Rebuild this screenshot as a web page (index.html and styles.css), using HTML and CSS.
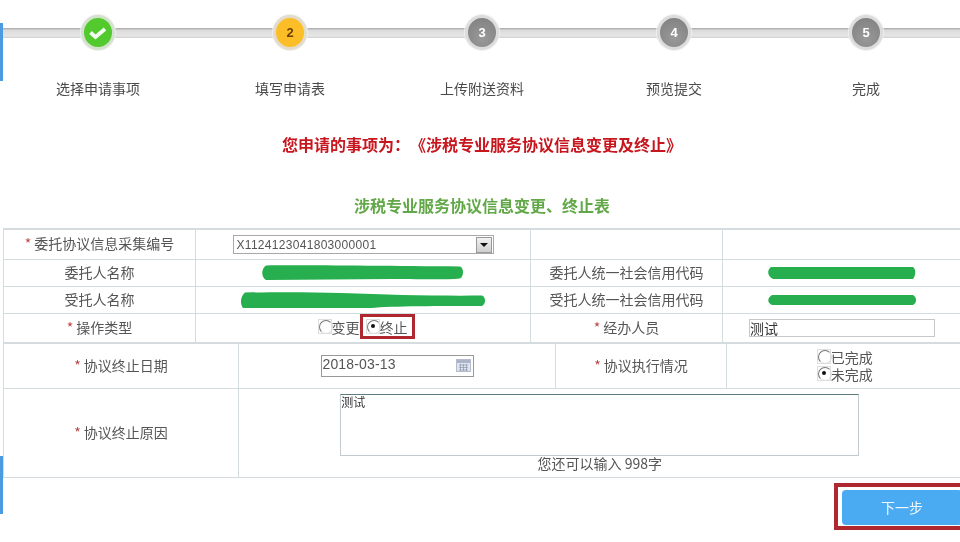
FILE: index.html
```
<!DOCTYPE html>
<html lang="zh-CN">
<head>
<meta charset="utf-8">
<title>涉税专业服务协议信息变更、终止表</title>
<link rel="stylesheet" href="styles.css">
</head>
<body>
<div class="page">
  <span class="edge edge-top"></span>
  <span class="edge edge-bottom"></span>
  <ol class="stepper">
    <li class="step done"><span class="dot"><svg width="20" height="20" viewBox="0 0 20 20"><path d="M2.500 9.500l5 4.500 9.500-8" fill="none" stroke="#f4fbef" stroke-width="3.800"/></svg></span><span class="step-label">选择申请事项</span></li>
    <li class="step current"><span class="dot">2</span><span class="step-label">填写申请表</span></li>
    <li class="step"><span class="dot">3</span><span class="step-label">上传附送资料</span></li>
    <li class="step"><span class="dot">4</span><span class="step-label">预览提交</span></li>
    <li class="step"><span class="dot">5</span><span class="step-label">完成</span></li>
  </ol>
  <h2 class="notice">您申请的事项为<span class="colon">：</span>《涉税专业服务协议信息变更及终止》</h2>
  <h1 class="form-title">涉税专业服务协议信息变更、终止表</h1>
  <table class="grid grid-a">
    <colgroup><col class="a1"><col class="a2"><col class="a3"><col class="a4"></colgroup>
    <tr class="r30">
      <td><i>*</i> 委托协议信息采集编号</td>
      <td><span class="select"><span>X1124123041803000001</span><b class="arrow"></b></span></td>
      <td></td><td></td>
    </tr>
    <tr class="r27">
      <td>委托人名称</td>
      <td><svg class="mask" width="202" height="15" viewBox="0 0 202 15"><path d="M4 0.500C40 0 120 1 198 1.500C202 3 202 11 198 13.500C180 15 160 14 130 14L4 15C-1 12 -1 4 4 0.500Z"/></svg></td>
      <td>委托人统一社会信用代码</td>
      <td><svg class="mask" width="149" height="14" viewBox="0 0 149 14"><path d="M4 1L146 1C149 3 149 9 146 13L6 13C0 10 0 4 4 1Z"/></svg></td>
    </tr>
    <tr class="r27">
      <td>受托人名称</td>
      <td><svg class="mask" width="245" height="16" viewBox="0 0 245 16"><path d="M4 0.500C40 0 70 0 100 1C150 3 200 4 241 3.500C245 5 245 12 241 14C200 14 150 14 130 16L2 16C-1 12 -1 5 4 0.500Z"/></svg></td>
      <td>受托人统一社会信用代码</td>
      <td><svg class="mask" width="150" height="12" viewBox="0 0 150 12"><path d="M5 1L146 1C150 3 150 9 146 11L5 11C0 9 0 4 5 1Z"/></svg></td>
    </tr>
    <tr class="r29">
      <td><i>*</i> 操作类型</td>
      <td><span class="op-row"><label class="choice"><input class="radio" type="radio" name="op">变更</label><label class="choice marked"><input class="radio" type="radio" name="op" checked>终止</label></span></td>
      <td><i>*</i> 经办人员</td>
      <td><input class="field staff" type="text" value="测试"></td>
    </tr>
  </table>
  <table class="grid grid-b">
    <colgroup><col class="b1"><col class="b2"><col class="b3"><col class="b4"></colgroup>
    <tr class="r45">
      <td><i>*</i> 协议终止日期</td>
      <td><span class="date"><span>2018-03-13</span><svg width="15" height="13" viewBox="0 0 15 13"><rect x="0.500" y="0.500" width="14" height="12" fill="#dfe4ee" stroke="#b5bccb"/><rect x="1" y="1" width="13" height="3" fill="#aab4c8"/><path d="M3 6h9M3 8.500h9M3 11h9M4.500 5v7M7.500 5v7M10.500 5v7" stroke="#8d97ac" stroke-width=".7"/></svg></span></td>
      <td><i>*</i> 协议执行情况</td>
      <td><div class="stack"><label class="choice"><input class="radio" type="radio" name="st">已完成</label><label class="choice"><input class="radio" type="radio" name="st" checked>未完成</label></div></td>
    </tr>
    <tr class="r89">
      <td><i>*</i> 协议终止原因</td>
      <td colspan="3" class="reason"><textarea class="memo">测试</textarea><p class="count">您还可以输入 998字</p></td>
    </tr>
  </table>
  <div class="actions"><div class="marked-btn"><button class="next" type="button">下一步</button></div></div>
</div>
</body>
</html>
```
FILE: styles.css
```
* { box-sizing: border-box; }
html, body { margin: 0; height: 100%; }
body { background: #fff; overflow: hidden; font-family: "Noto Sans CJK SC", sans-serif; font-size: 14px; color: #555; }
.page { position: relative; width: 960px; height: 542px; overflow: hidden; filter: blur(.35px); }
.edge { position: absolute; left: 0; width: 3px; background: #4a9be0; }
.edge-top { top: 23px; height: 58px; }
.edge-bottom { top: 456px; height: 58px; }

.stepper {
  list-style: none; margin: 0; padding: 15px 0 0 2px; width: 962px; height: 100px;
  display: grid; grid-template-columns: repeat(5, 192px);
  background: linear-gradient(#a9a9a9, #dcdcdc 25%, #e6e6e6 80%, #d0d0d0) 3px 28px / 957px 10px no-repeat;
}
.step { display: flex; flex-direction: column; align-items: center; }
.dot {
  width: 34px; height: 35px; border-radius: 50%; display: flex; align-items: center; justify-content: center;
  border: 3px solid #dcdcdc; font: bold 13px "Liberation Sans", sans-serif; color: #fff;
  background: radial-gradient(circle at 50% 70%, #999, #7e7e7e);
  box-shadow: 0 0 0 1px #efefef;
}
.done .dot { background: #52c92c; border-color: #d3e2cc; }
.current .dot { background: #fbbe27; border-color: #e3dccb; color: #6d3d00; }
.step-label { margin-top: 28px; line-height: 20px; color: #4a4a4a; }

.notice, .form-title { margin: 0; font-size: 16px; line-height: 24px; font-weight: 700; text-align: center; text-spacing-trim: space-all; }
.notice { color: #c8161e; margin-top: 32px; padding-left: 4px; }
.colon { font-family: "Noto Sans CJK TC", sans-serif; }
.form-title { color: #62a848; margin-top: 37px; padding-left: 4px; margin-bottom: 11px; }

.grid { border-collapse: collapse; table-layout: fixed; width: 957px; margin-left: 3px; }
.grid td { border: 1px solid #d5dcdf; padding: 0 0 2px; line-height: 20px; text-align: center; vertical-align: middle; }
.grid tr > td:last-child { border-right: 0; }
.grid-a { border-top: 2px solid #d5dcdf; }
.grid-b { border-top: 2px solid #d5dcdf; }
.grid-a tr:last-child td { border-bottom: 0; }
.grid-b tr:first-child td { border-top: 0; }
.a1 { width: 192px; } .a2 { width: 335px; } .a3 { width: 192px; } .a4 { width: 238px; }
.b1 { width: 235px; } .b2 { width: 317px; } .b3 { width: 171px; } .b4 { width: 234px; }
.r30 { height: 30px; } .r29 { height: 29px; } .r27 { height: 27px; } .r45 { height: 45px; } .r89 { height: 89px; }
i { font-style: normal; color: #b44; }

.select {
  display: inline-flex; align-items: center; justify-content: space-between; width: 261px; height: 19px;
  border: 1px solid #a9a9a9; padding: 0 1px 0 3px; font: 12px "Liberation Sans", sans-serif; letter-spacing: .3px; text-align: left; vertical-align: middle;
}
.arrow {
  width: 16px; height: 16px; border: 1px solid #999; background: linear-gradient(#f2f2f2, #cfcfcf);
  display: flex; align-items: center; justify-content: center;
}
.arrow::before { content: ""; border: 4px solid transparent; border-top: 4px solid #111; border-bottom: 0; }
.mask { display: block; margin: 2px auto 0; fill: #27ae4e; }

.op-row { display: inline-flex; align-items: center; margin-left: 6px; vertical-align: middle; }
.choice { display: inline-flex; align-items: center; line-height: 16px; }
.radio {
  appearance: none; flex: none; margin: -1px 0 0 0; width: 14px; height: 15px; border: 1px solid #dedede; border-radius: 0; background: #fff; position: relative;
}
.radio::before { content: ""; position: absolute; left: 0; top: 0; width: 12px; height: 12px; border-radius: 50%; border: 1px solid; border-color: #777 #ddd #ddd #777; }
.radio:checked::after { content: ""; position: absolute; left: 4px; top: 4px; width: 4px; height: 4px; border-radius: 50%; background: #111; }
.marked { padding: 0 4px 0 3px; border: 3px solid #b0282f; height: 25px; }
.stack { display: inline-flex; flex-direction: column; margin: 2px 0 0 2px; vertical-align: middle; }
.stack .choice { height: 17px; }

.field { display: block; width: 186px; height: 18px; margin: 2px 0 0 26px; border: 1px solid #c8c8c8; padding: 0; font: 14px "Noto Sans CJK SC", sans-serif; color: #333; outline: 0; }
.date { display: inline-flex; align-items: center; justify-content: space-between; width: 153px; height: 22px; margin-top: 2px; border: 1px solid #999; padding: 0 2px 0 1px; font: 14px "Liberation Sans", sans-serif; letter-spacing: .15px; color: #555; vertical-align: middle; }
.date span { margin-top: -4px; }

.grid .reason { vertical-align: top; padding: 5px 0 0; }
.memo { display: block; width: 519px; height: 62px; margin: 0 auto; border: 1px solid #c2ccd0; border-top-color: #5f7d80; padding: 0; resize: none; font: 12px/13px "Noto Sans CJK SC", sans-serif; color: #333; outline: 0; overflow: hidden; }
.count { margin: 0; line-height: 15px; color: #555; }

.actions { display: flex; justify-content: flex-end; padding-top: 5px; margin-right: -10px; }
.marked-btn { border: 4px solid #b0282f; padding: 3px 4px 1px 4px; width: 136px; height: 47px; }
.next { display: block; width: 100%; height: 35px; border: 0; border-radius: 4px; background: #4aaaf2; color: #f2f8ff; font: 14px "Noto Sans CJK SC", sans-serif; padding-right: 6px; }
```
